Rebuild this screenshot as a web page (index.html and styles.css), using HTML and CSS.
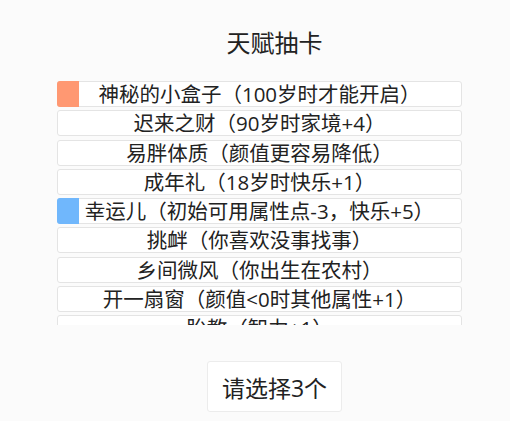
FILE: index.html
```html
<!DOCTYPE html>
<html lang="zh-CN">
<head>
<meta charset="utf-8">
<title>天赋抽卡</title>
<link rel="stylesheet" href="styles.css">
</head>
<body>
<main class="page">
  <h1 class="title">天赋抽卡</h1>
  <ul class="talents">
    <li class="talent"><span class="grade grade-orange"></span>神秘的小盒子（100岁时才能开启）</li>
    <li class="talent">迟来之财（90岁时家境+4）</li>
    <li class="talent">易胖体质（颜值更容易降低）</li>
    <li class="talent">成年礼（18岁时快乐+1）</li>
    <li class="talent"><span class="grade grade-blue"></span>幸运儿（初始可用属性点-3，快乐+5）</li>
    <li class="talent">挑衅（你喜欢没事找事）</li>
    <li class="talent">乡间微风（你出生在农村）</li>
    <li class="talent">开一扇窗（颜值&lt;0时其他属性+1）</li>
    <li class="talent">胎教（智力+1）</li>
    <li class="talent">天生残疾（体质-2）</li>
  </ul>
  <button class="confirm">请选择3个</button>
</main>
</body>
</html>
```

FILE: styles.css
```css
html, body {
  margin: 0;
  padding: 0;
  background: #fbfbfb;
}

body {
  font-family: "Open Sans", "Noto Sans CJK SC", sans-serif;
  color: #222;
}

.page {
  width: 435px;
  margin-left: 57px;
  display: flex;
  flex-direction: column;
  align-items: center;
}

.title {
  margin: 28px 0 0;
  font-size: 24px;
  line-height: 30px;
  font-weight: normal;
  color: #222;
}

.talents {
  list-style: none;
  margin: 23px 0 0;
  padding: 0 20px 0 0;
  width: 435px;
  box-sizing: border-box;
  height: 244px;
  overflow-y: scroll;
  display: flex;
  flex-direction: column;
  gap: 3.25px;
}

.talents::-webkit-scrollbar {
  width: 10px;
}

.talents::-webkit-scrollbar-track {
  background: #f1f1f1;
}

.talents::-webkit-scrollbar-thumb {
  background: #c1c1c1;
}

.talents::-webkit-scrollbar-button:single-button {
  display: block;
  height: 9px;
  background-color: #f1f1f1;
  background-repeat: no-repeat;
  background-size: 3px 3px;
}

.talents::-webkit-scrollbar-button:single-button:vertical:decrement {
  background-image:
    linear-gradient(135deg, transparent 50%, #8a8a8a 50%),
    linear-gradient(225deg, transparent 50%, #8a8a8a 50%);
  background-position: 2px 3px, 5px 3px;
}

.talents::-webkit-scrollbar-button:single-button:vertical:increment {
  background-image:
    linear-gradient(45deg, transparent 50%, #8a8a8a 50%),
    linear-gradient(315deg, transparent 50%, #8a8a8a 50%);
  background-position: 2px 3px, 5px 3px;
}

.talent {
  position: relative;
  flex: 0 0 auto;
  width: 405px;
  height: 26px;
  box-sizing: border-box;
  border: 1px solid #e4e4e4;
  border-radius: 3px;
  background: #fff;
  font-size: 20.5px;
  line-height: 24px;
  text-align: center;
  white-space: nowrap;
  color: #222;
}

.grade {
  position: absolute;
  left: -1px;
  top: -1px;
  bottom: -1px;
  width: 22px;
  border-radius: 3px 0 0 3px;
}

.grade-orange {
  background: #ff9872;
}

.grade-blue {
  background: #70b7fc;
}

.confirm {
  margin-top: 36px;
  width: 135px;
  height: 51px;
  box-sizing: border-box;
  border: 1px solid #ececec;
  border-radius: 3px;
  background: #fff;
  font-family: "Open Sans", "Noto Sans CJK SC", sans-serif;
  font-size: 23px;
  color: #222;
  padding: 0;
}
```
